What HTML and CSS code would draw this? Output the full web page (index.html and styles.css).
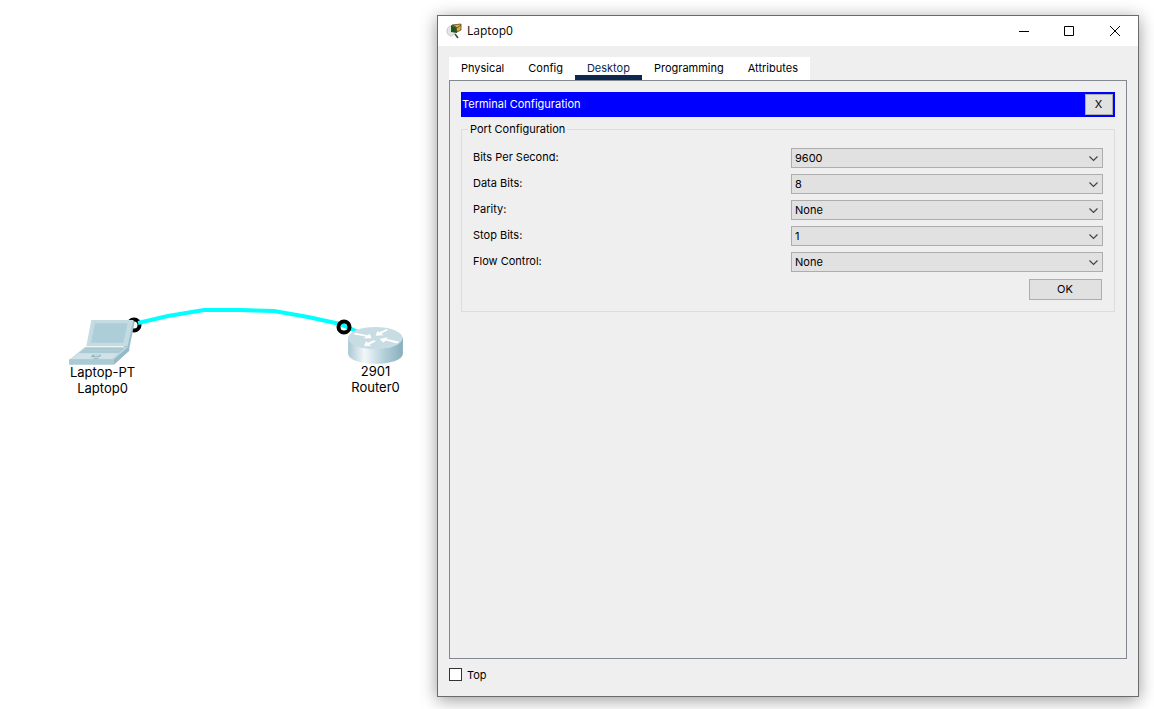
FILE: index.html
```
<!DOCTYPE html>
<html lang="en">
<head>
  <meta charset="UTF-8" />
  <meta name="viewport" content="width=device-width, initial-scale=1" />
  <title>Laptop0</title>
  <link rel="stylesheet" href="styles.css">
</head>
<body>
  <!-- Network topology -->
  <main class="workspace">
    <svg class="cable" width="437" height="400" viewBox="0 0 437 400" aria-hidden="true">
      <circle cx="134" cy="325" r="5.5" />
      <polyline points="138,323 168,316 204,310 240,310 274,311 308,317 340,324 358,332" />
      <circle cx="344" cy="327" r="5.5" />
    </svg>

    <div class="node laptop">
      <svg width="67" height="45" viewBox="0 0 201 135" aria-hidden="true">
        <path fill="#9bbfcb" d="M192 0l5 6-15 74-10 10-8-8z" />
        <path fill="#c5dbe2" d="M67 0h126l-17 78H52z" />
        <path fill="#adcdd8" d="M78 10h98l-13 58H66z" />
        <path fill="#bdd6df" d="M49 80h132l-46 40H0z" />
        <path fill="#a6c6d0" d="M50 84h116l-16 14H32z" />
        <path stroke="#c3dae1" stroke-width="2" stroke-dasharray="5 3" d="M46 88h112M40 93h112" />
        <path fill="#d0e1e7" d="M30 100h118l-18 17H4z" />
        <path fill="#8fb6c3" d="M70 104h28l-8 8H66zM74 115h14v3H74z" />
        <path fill="#dbe9ed" d="M77 106h14l-3 3H75z" />
        <path fill="#aacad4" d="M0 118h135v16H0z" />
        <path fill="#95bac6" d="M135 118l46-40v14l-46 42z" />
      </svg>
      <span>Laptop-PT</span>
      <span>Laptop0</span>
    </div>

    <div class="node router">
      <svg width="55" height="37" viewBox="0 0 163 110" aria-hidden="true">
        <defs>
          <linearGradient id="side">
            <stop offset="0" stop-color="#a9c8d3" />
            <stop offset=".3" stop-color="#f2f7f9" />
            <stop offset=".65" stop-color="#b4d0d9" />
            <stop offset="1" stop-color="#86afbd" />
          </linearGradient>
        </defs>
        <path fill="url(#side)" d="M0 32v46c0 42 163 42 163 0V32z" />
        <ellipse cx="81" cy="33" rx="81" ry="33" fill="#c8dce3" />
        <g fill="#fff" stroke="#b4ccd5" stroke-width="1">
          <path d="M13 22l10-6 34 8 8-5 6 15-27 1 7-6z" />
          <path d="M81 27l5-16 7 4 21-10 6 5-20 10 8 5z" />
          <path d="M92 35l28-6-4 6 37 8-7 7-34-9-7 6z" />
          <path d="M46 57l7-16 6 5 18-8 7 5-19 9 8 5z" />
        </g>
      </svg>
      <span>2901</span>
      <span>Router0</span>
    </div>
  </main>

  <!-- Device window -->
  <section class="window">
    <header class="titlebar">
      <svg width="17" height="17" viewBox="0 0 17 17" aria-hidden="true">
        <ellipse cx="5" cy="8" rx="4" ry="5" fill="#e4e6e4" stroke="#c6c9c6" />
        <path fill="#155c22" d="M5 2l6 3v5l-6-1z" />
        <path fill="#d9ad58" stroke="#5d4719" stroke-width=".8" d="M6 2l9-1v6l-4 2-1-5z" />
        <path fill="none" stroke="#5d4719" stroke-width=".8" d="M7 2l4 3 4-3" />
        <path fill="none" stroke="#444" stroke-width="1.5" d="M9 11l3 4" />
      </svg>
      <h1>Laptop0</h1>
      <div class="window-buttons">
        <button aria-label="Minimize"><svg width="11" height="11" viewBox="0 0 11 11"><path d="M1 5.500h10" /></svg></button>
        <button aria-label="Maximize"><svg width="11" height="11" viewBox="0 0 11 11"><path d="M.5.5h9v9h-9z" /></svg></button>
        <button aria-label="Close"><svg width="11" height="11" viewBox="0 0 11 11"><path d="M0 0l10 10M10 0L0 10" /></svg></button>
      </div>
    </header>

    <nav class="tabs">
      <button>Physical</button>
      <button>Config</button>
      <button class="active">Desktop</button>
      <button>Programming</button>
      <button>Attributes</button>
    </nav>

    <div class="panel">
      <div class="panel-title">
        <h2>Terminal Configuration</h2>
        <button aria-label="Close terminal configuration">X</button>
      </div>

      <fieldset>
        <legend>Port Configuration</legend>
        <div class="row">
          <label for="bits">Bits Per Second:</label>
          <div class="select">
            <select id="bits"><option>9600</option></select>
            <svg width="10" height="6" viewBox="0 0 10 6"><path d="M.5.5l4 4 4-4" /></svg>
          </div>
        </div>
        <div class="row">
          <label for="data">Data Bits:</label>
          <div class="select">
            <select id="data"><option>8</option></select>
            <svg width="10" height="6" viewBox="0 0 10 6"><path d="M.5.5l4 4 4-4" /></svg>
          </div>
        </div>
        <div class="row">
          <label for="parity">Parity:</label>
          <div class="select">
            <select id="parity"><option>None</option></select>
            <svg width="10" height="6" viewBox="0 0 10 6"><path d="M.5.5l4 4 4-4" /></svg>
          </div>
        </div>
        <div class="row">
          <label for="stop">Stop Bits:</label>
          <div class="select">
            <select id="stop"><option>1</option></select>
            <svg width="10" height="6" viewBox="0 0 10 6"><path d="M.5.5l4 4 4-4" /></svg>
          </div>
        </div>
        <div class="row">
          <label for="flow">Flow Control:</label>
          <div class="select">
            <select id="flow"><option>None</option></select>
            <svg width="10" height="6" viewBox="0 0 10 6"><path d="M.5.5l4 4 4-4" /></svg>
          </div>
        </div>
        <button class="ok">OK</button>
      </fieldset>
    </div>

    <label class="top-check"><input type="checkbox"> Top</label>
  </section>
</body>
</html>
```
FILE: styles.css
```
* {
  box-sizing: border-box;
}
body {
  display: grid;
  grid-template-columns: 437px 1fr;
  min-height: 100vh;
  margin: 0;
  background: #fff;
  color: #000;
  font-family: Inter, "Liberation Sans", sans-serif;
  font-size: 11px;
  line-height: 16px;
}
button, select, input {
  margin: 0;
  font: inherit;
  color: inherit;
}
h1, h2 {
  margin: 0;
  font-size: inherit;
  font-weight: normal;
}

/* Topology canvas */
.workspace {
  position: relative;
}
.cable {
  position: absolute;
  top: 0;
  left: 0;
  fill: none;
  stroke: #000;
  stroke-width: 4;
}
.cable polyline {
  stroke: #00ffff;
}
.node {
  position: absolute;
  display: flex;
  flex-direction: column;
  align-items: center;
  font-size: 13px;
}
.node svg {
  margin-bottom: -1px;
}
.laptop {
  top: 320px;
  left: 69px;
}
.router {
  top: 327px;
  left: 348px;
}

/* Window */
.window {
  display: flex;
  flex-direction: column;
  margin: 15px 15px 12px 0;
  border: 1px solid #6b6b6b;
  background: #efefef;
  box-shadow: 0 3px 16px rgba(0, 0, 0, 0.4);
}
.titlebar {
  display: flex;
  align-items: center;
  height: 30px;
  padding-left: 8px;
  gap: 4px;
  background: #fff;
}
.titlebar h1 {
  flex: 1;
  font-family: "Open Sans", sans-serif;
  font-size: 12px;
}
.window-buttons {
  display: flex;
}
.window-buttons button {
  display: grid;
  place-items: center;
  width: 46px;
  height: 30px;
  padding: 0;
  border: none;
  background: none;
}
.window-buttons path {
  fill: none;
  stroke: #000;
}

.tabs {
  display: flex;
  align-self: flex-start;
  margin: 11px 0 0 11px;
  background: #fff;
}
.tabs button {
  height: 23px;
  padding: 0 12px 2px;
  border: none;
  background: none;
}
.tabs .active {
  color: #0d274d;
  box-shadow: inset 0 -5px #0d274d;
}

.panel {
  flex: 1;
  margin: 0 11px;
  padding: 11px;
  border: 1px solid #828790;
}
.panel-title {
  display: flex;
  align-items: center;
  justify-content: space-between;
  height: 25px;
  padding: 0 2px 0 1px;
  background: #0000ff;
  color: #fff;
}
.panel-title h2 {
  padding-bottom: 1px;
}
.panel-title button {
  width: 28px;
  height: 21px;
  padding: 0 1px 1px 0;
  border: 1px solid #adadad;
  background: #e1e1e1;
  color: #000;
}
fieldset {
  display: flex;
  flex-direction: column;
  gap: 6px;
  margin: 4px 0 0;
  padding: 11px;
  border: 1px solid #dcdcdc;
}
legend {
  margin-left: -5px;
  padding: 0 2px;
}
.row {
  display: grid;
  grid-template-columns: 1fr 1fr;
  gap: 6px;
}
.row label {
  line-height: 18px;
}
.select {
  position: relative;
}
.select select {
  display: block;
  width: 100%;
  height: 20px;
  padding: 0 3px;
  border: 1px solid #adadad;
  border-radius: 0;
  background: #e1e1e1;
  appearance: none;
}
.select svg {
  position: absolute;
  top: 8px;
  right: 4px;
  fill: none;
  stroke: #444;
  stroke-width: 1.2;
  pointer-events: none;
}
.ok {
  align-self: flex-end;
  width: 73px;
  height: 21px;
  margin: 1px 1px 0 0;
  padding: 0 1px 1px 0;
  border: 1px solid #adadad;
  background: #e1e1e1;
}

.top-check {
  display: flex;
  align-self: flex-start;
  align-items: center;
  gap: 5px;
  height: 31px;
  margin: 0 11px 6px;
}
.top-check input {
  width: 13px;
  height: 13px;
  border: 1px solid #333;
  background: #fff;
  appearance: none;
}
```
